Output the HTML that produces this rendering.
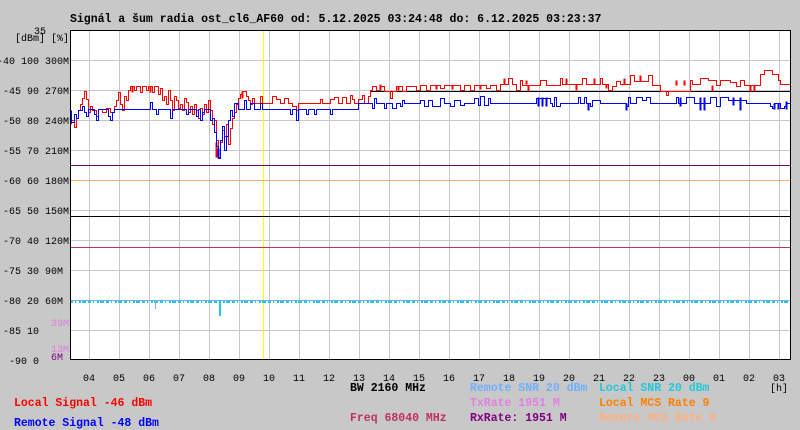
<!DOCTYPE html>
<html><head><meta charset="utf-8"><style>
html,body{margin:0;padding:0;background:#c8c8c8;}
svg{display:block;}
.l{font-family:"Liberation Mono",monospace;font-size:10px;}
.b{font-family:"Liberation Mono",monospace;font-size:11.5px;font-weight:bold;}
path,line,rect{shape-rendering:crispEdges;}
</style></head><body>
<svg width="800" height="430" viewBox="0 0 800 430" xmlns="http://www.w3.org/2000/svg">
<rect width="800" height="430" fill="#c8c8c8"/>
<rect x="70" y="30" width="720" height="330" fill="#fff"/>
<g stroke="#c8c8c8" stroke-width="1">
<path d="M70 60.5H790M70 90.5H790M70 120.5H790M70 150.5H790M70 180.5H790M70 210.5H790M70 240.5H790M70 270.5H790M70 300.5H790M70 330.5H790"/>
<path d="M89.5 30V360M119.5 30V360M149.5 30V360M179.5 30V360M209.5 30V360M239.5 30V360M269.5 30V360M299.5 30V360M329.5 30V360M359.5 30V360M389.5 30V360M419.5 30V360M449.5 30V360M479.5 30V360M509.5 30V360M539.5 30V360M569.5 30V360M599.5 30V360M629.5 30V360M659.5 30V360M689.5 30V360M719.5 30V360M749.5 30V360M779.5 30V360"/>
</g>
<rect x="263" y="30" width="1" height="330" fill="#ffff00"/>
<rect x="70" y="165" width="720" height="1" fill="#6a0a6a"/>
<rect x="70" y="180" width="720" height="1" fill="#ffb070"/>
<rect x="70" y="216" width="720" height="1" fill="#000"/>
<rect x="70" y="247" width="720" height="1" fill="#c03060"/>
<rect x="370" y="91" width="420" height="1" fill="#000"/>
<!-- cyan / light blue -->
<rect x="70" y="300" width="720" height="1" fill="#70b0ff"/>
<line x1="70" y1="302" x2="790" y2="302" stroke="#20c8d8" stroke-width="2" stroke-dasharray="3 2 1 3 2 1 4 2"/>
<rect x="155" y="300" width="1" height="9" fill="#70b0ff"/>
<rect x="219" y="300" width="2" height="16" fill="#20c8d8"/>
<!-- red -->
<g transform="translate(0.5,0.5)">
<path fill="none" stroke="#ff0000" stroke-width="1" d="M71 124V120H74V127H76V118H78V110H80V104H82V98H84V91H86V99H88V112H90V106H92V110H96V116H98V109H102V112H106V108H110V112H114V106H116V100H118V92H120V104H122V110H124V96H126V100H128V90H130V86H134V90H136V86H140V92H142V86H146V90H148V86H152V92H154V86H158V94H160V88H162V100H164V96H166V104H168V90H170V100H172V110H174V96H176V100H178V108H180V104H182V110H184V98H186V102H188V112H190V106H192V114H194V104H196V110H198V118H200V108H202V114H204V104H206V112H208V100H210V110H212V124H214V120H216V140H218V157H220V142H222V130H224V136H226V124H228V144H230V128H232V118H234V112H236V104H238V98H240V94H242V91H246V96H248V100H250V104H252V98H254V103H260V96H262V103H272V96H276V99H280V103H284V98H288V103H292V106H296V110H298V103H320V99H322V103H330V99H334V97H338V103H342V97H346V103H350V95H352V99H354V103H358V99H362V95H364V103H368V96H370V90H372V86H376V90H380V86H384V91H390V98H392V91H396V86H402V91H406V86H416V90H420V85H426V90H430V85H440V88H444V85H460V90H464V85H470V90H474V85H486V88H490V85H496V90H500V84H508V78H512V84H516V90H520V80H522V85H540V80H546V85H560V78H562V84H582V78H586V84H600V78H602V84H608V90H612V86H616V81H620V84H630V75H634V81H648V75H652V85H660V91H666V95H668V91H690V80H692V84H700V78H708V80H716V85H720V80H730V82H736V86H740V80H744V85H760V74H764V70H772V74H778V80H780V84H790"/>
<path fill="none" stroke="#ff0000" stroke-width="2" d="M380 84V90M398 86V90M436 85V89M452 85V89M480 85V89M504 78V84M526 80V84M528 85V91M566 78V84M576 84V90M594 78V84M606 84V88M624 78V84M640 75V81M676 80V85M684 80V85M712 85V91M750 85V91M754 85V91M132 86V92M150 86V92M216 142V157M242 91V98"/>
<!-- blue -->
<path fill="none" stroke="#0000ff" stroke-width="1" d="M71 110V122H74V114H76V118H78V110H82V106H84V112H86V116H88V109H94V114H96V120H98V109H108V116H110V120H112V112H114V109H150V102H152V109H156V114H158V109H170V118H172V109H186V114H188V109H196V116H198V109H200V120H202V112H204V109H210V120H212V118H214V132H216V146H218V158H220V140H222V126H224V150H226V136H228V120H230V110H232V116H234V103H238V109H244V100H246V109H250V103H254V109H260V103H262V109H290V114H292V109H296V120H298V109H306V114H308V109H314V114H316V109H330V114H332V109H358V103H372V108H374V98H376V103H384V108H386V103H392V108H396V103H400V106H402V100H404V103H420V100H424V106H428V100H432V106H440V98H444V103H450V106H454V100H460V105H464V103H474V98H478V105H480V96H484V105H488V98H490V103H536V98H550V103H552V106H554V97H556V106H560V103H578V97H580V103H584V97H586V103H590V106H592V100H600V103H626V106H628V97H630V103H636V97H642V100H646V97H650V103H676V97H678V103H686V97H694V103H710V97H716V106H720V97H728V100H736V100H746V103H770V106H772V108H774V103H780V108H784V106H786V103H790"/>
<path fill="none" stroke="#0000ff" stroke-width="2" d="M538 97V106M542 97V106M546 97V106M588 103V110M626 103V110M680 97V106M700 97V110M704 97V110M733 97V105M740 97V110M774 103V109M778 103V109M786 101V109M218 148V158"/>
</g>
<rect x="70" y="30" width="720" height="1" fill="#000"/>
<rect x="70" y="359" width="721" height="1" fill="#000"/>
<rect x="70" y="30" width="1" height="330" fill="#000"/>
<rect x="790" y="30" width="1" height="330" fill="#000"/>
<!-- title -->
<text class="b" x="70" y="22">Signál a šum radia ost_cl6_AF60 od: 5.12.2025 03:24:48 do: 6.12.2025 03:23:37</text>
<!-- y labels -->
<g class="l" fill="#000" text-anchor="end">
<text x="46" y="34">35</text>
<text x="69" y="41">[dBm] [%]</text>
<text x="69" y="64">-40 100 300M</text>
<text x="69" y="94">-45 90 270M</text>
<text x="69" y="124">-50 80 240M</text>
<text x="69" y="154">-55 70 210M</text>
<text x="69" y="184">-60 60 180M</text>
<text x="69" y="214">-65 50 150M</text>
<text x="69" y="244">-70 40 120M</text>
<text x="63" y="274">-75 30 90M</text>
<text x="63" y="304">-80 20 60M</text>
<text x="39" y="334">-85 10</text>
<text x="39" y="364">-90 0</text>
<text x="69" y="326" fill="#e080e0">39M</text>
<text x="69" y="352" fill="#e080e0">13M</text>
<text x="63" y="360" fill="#800080">6M</text>
</g>
<!-- x labels -->
<g class="l" fill="#000" text-anchor="middle">
<text x="89" y="381">04</text><text x="119" y="381">05</text><text x="149" y="381">06</text><text x="179" y="381">07</text><text x="209" y="381">08</text><text x="239" y="381">09</text><text x="269" y="381">10</text><text x="299" y="381">11</text><text x="329" y="381">12</text><text x="359" y="381">13</text><text x="389" y="381">14</text><text x="419" y="381">15</text><text x="449" y="381">16</text><text x="479" y="381">17</text><text x="509" y="381">18</text><text x="539" y="381">19</text><text x="569" y="381">20</text><text x="599" y="381">21</text><text x="629" y="381">22</text><text x="659" y="381">23</text><text x="689" y="381">00</text><text x="719" y="381">01</text><text x="749" y="381">02</text><text x="779" y="381">03</text>
<text x="779" y="391">[h]</text>
</g>
<!-- legend -->
<text class="b" x="350" y="391" fill="#000">BW 2160 MHz</text>
<text class="b" x="470" y="391" fill="#70b0ff">Remote SNR 20 dBm</text>
<text class="b" x="599" y="391" fill="#20c8d8">Local SNR 20 dBm</text>
<text class="b" x="14" y="406" fill="#ff0000">Local Signal -46 dBm</text>
<text class="b" x="470" y="406" fill="#e080e0">TxRate 1951 M</text>
<text class="b" x="599" y="406" fill="#ff7f00">Local MCS Rate 9</text>
<text class="b" x="14" y="426" fill="#0000ff">Remote Signal -48 dBm</text>
<text class="b" x="350" y="421" fill="#c03060">Freq 68040 MHz</text>
<text class="b" x="470" y="421" fill="#800080">RxRate: 1951 M</text>
<text class="b" x="599" y="421" fill="#ffb080">Remote MCS Rate 9</text>
</svg>
</body></html>
